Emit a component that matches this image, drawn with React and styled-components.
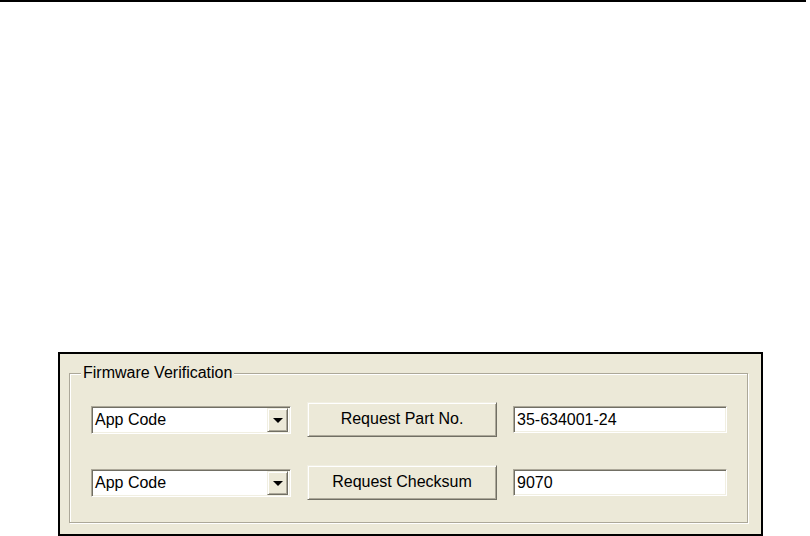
import React from "react";
import styled, { createGlobalStyle } from "styled-components";

const GlobalStyle = createGlobalStyle`
  html, body {
    margin: 0;
    padding: 0;
    background: #ffffff;
  }
  body {
    font-family: "Liberation Sans", Arial, sans-serif;
    color: #000;
  }
`;

const Page = styled.div`
  width: 810px;
  height: 536px;
  overflow: hidden;
  background: #fff;
`;

const TopRule = styled.div`
  width: 806px;
  height: 2px;
  background: #000;
`;

const Panel = styled.div`
  box-sizing: border-box;
  width: 705px;
  margin: 350px 0 0 58px;
  padding: 11px 13px 11px 9px;
  border: 2px solid #000;
  background: #ece9d8;
`;

const GroupBox = styled.fieldset`
  margin: 0;
  padding: 21px 20px 22px 21px;
  border: 1px solid #aca899;
  box-shadow: inset 1px 1px 0 #fff, 1px 1px 0 #fff;
  min-width: 0;
`;

const Legend = styled.legend`
  margin-left: -10px;
  padding: 0 2px;
  font-size: 16px;
  line-height: 16px;
  background: #ece9d8;
`;

const Rows = styled.div`
  display: grid;
  grid-template-columns: 200px 190px 214px;
  column-gap: 16px;
  row-gap: 28px;
  align-items: center;
`;

// sunken 3D edge shared by the combo and the edit boxes
const Sunken = styled.div`
  box-sizing: border-box;
  display: flex;
  align-items: center;
  height: ${(p) => p.$h || 28}px;
  background: #fff;
  border-top: 1px solid #aca899;
  border-left: 1px solid #aca899;
  border-bottom: 1px solid #fff;
  border-right: 1px solid #fff;
  box-shadow: inset 1px 1px 0 #716f64, inset -1px -1px 0 #f1efe2;
  font-size: 16px;
  padding-left: 3px;
`;

const ComboText = styled.span`
  flex: 1;
`;

const DropButton = styled.span`
  box-sizing: border-box;
  width: 21px;
  height: 24px;
  margin-right: 2px;
  display: flex;
  align-items: center;
  justify-content: center;
  background: #ece9d8;
  border-top: 1px solid #f1efe2;
  border-left: 1px solid #f1efe2;
  border-bottom: 1px solid #716f64;
  border-right: 1px solid #716f64;
  box-shadow: inset 1px 1px 0 #fff, inset -1px -1px 0 #aca899;

  &::after {
    content: "";
    width: 0;
    height: 0;
    border-left: 5px solid transparent;
    border-right: 5px solid transparent;
    border-top: 5px solid #000;
    margin-top: 2px;
  }
`;

const PushButton = styled.button`
  box-sizing: border-box;
  height: 35px;
  padding: 0;
  font-family: "Liberation Sans", Arial, sans-serif;
  font-size: 16px;
  color: #000;
  background: #ece9d8;
  border-top: 1px solid #f1efe2;
  border-left: 1px solid #f1efe2;
  border-bottom: 1px solid #716f64;
  border-right: 1px solid #716f64;
  box-shadow: inset 1px 1px 0 #fff, inset -1px -1px 0 #aca899;
  padding-bottom: 2px;
`;

const EditBox = styled(Sunken)`
  height: 27px;
`;

const rows = [
  { part: "App Code", action: "Request Part No.", value: "35-634001-24" },
  { part: "App Code", action: "Request Checksum", value: "9070" },
];

const App = () => {
  return (
    <Page>
      <GlobalStyle />
      <TopRule />
      <Panel>
        <GroupBox>
          <Legend>Firmware Verification</Legend>
          <Rows>
            {rows.map((row, i) => (
              <React.Fragment key={i}>
                <Sunken>
                  <ComboText>{row.part}</ComboText>
                  <DropButton />
                </Sunken>
                <PushButton>{row.action}</PushButton>
                <EditBox>{row.value}</EditBox>
              </React.Fragment>
            ))}
          </Rows>
        </GroupBox>
      </Panel>
    </Page>
  );
};

export default App;
